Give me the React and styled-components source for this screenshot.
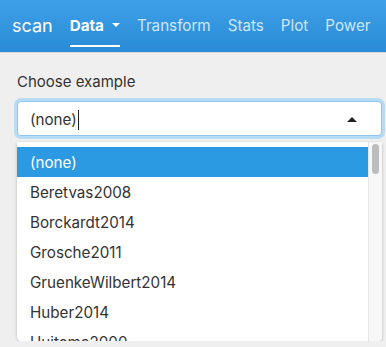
import styled, { createGlobalStyle } from 'styled-components'

const GlobalStyle = createGlobalStyle`
  body {
    margin: 0;
    background: #efefef;
    font-family: Inter, "Helvetica Neue", "Liberation Sans", sans-serif;
    overflow: hidden;
  }
`;

const Navbar = styled.div`
  height: 52px;
  display: flex;
  align-items: center;
  padding-left: 12px;
  background: linear-gradient(#3ea1e8, #2a8ad6);
  border-bottom: 1px solid #d8d8d8;
  white-space: nowrap;
`;
const Brand = styled.div`
  color: #fff;
  font-size: 18px;
  margin-right: 17px;
  padding-bottom: 2px;
`;
const NavItem = styled.div`
  position: relative;
  display: flex;
  align-items: center;
  font-size: 15.2px;
  margin-right: 17px;
  color: ${(props) => (props.active ? '#fff' : '#cfe6f8')};
  font-weight: ${(props) => (props.active ? 700 : 400)};
  padding-bottom: 2px;
  & span.caret {
    margin-left: 8px;
    width: 0;
    height: 0;
    border-left: 4px solid transparent;
    border-right: 4px solid transparent;
    border-top: 4px solid #fff;
  }
  &::after {
    content: '';
    display: ${(props) => (props.active ? 'block' : 'none')};
    position: absolute;
    left: 0;
    right: 0;
    top: 29px;
    height: 2px;
    background: #fff;
  }
`;

const Panel = styled.div`
  padding: 19px 4px 0 17px;
`;
const Label = styled.div`
  font-size: 15px;
  color: #333;
  margin-bottom: 10px;
`;
const SelectBox = styled.div`
  height: 33px;
  background: #fff;
  border: 1px solid #8fc6ee;
  border-radius: 4px;
  box-shadow: 0 0 0 3px #b9dcf5;
  display: flex;
  align-items: center;
  padding: 2px 24px 0 12px;
  box-sizing: content-box;
  height: 31px;
  font-size: 15.2px;
  color: #333;
  & .cursor {
    width: 1px;
    height: 20px;
    background: #222;
    margin-left: 1px;
  }
  & .spacer {
    flex: 1;
  }
  & .arrow {
    width: 0;
    height: 0;
    border-left: 5px solid transparent;
    border-right: 5px solid transparent;
    border-bottom: 5px solid #222;
  }
`;
const Menu = styled.div`
  margin-top: 6px;
  height: 199px;
  background: #fff;
  border-radius: 0 0 4px 4px;
  box-shadow: 0 1px 3px rgba(0, 0, 0, 0.25);
  display: flex;
  overflow: hidden;
`;
const Options = styled.div`
  flex: 1;
  padding-top: 5px;
`;
const Option = styled.div`
  height: 30px;
  display: flex;
  align-items: center;
  padding-left: 13px;
  font-size: 15.2px;
  color: ${(props) => (props.selected ? '#fff' : '#333')};
  background: ${(props) => (props.selected ? '#2c9ae3' : 'transparent')};
`;
const Scrollbar = styled.div`
  width: 14px;
  background: #f7f7f7;
  border-left: 1px solid #e6e6e6;
  padding: 2px 3px;
  box-sizing: border-box;
  & div {
    height: 30px;
    border-radius: 4px;
    background: #bdbdbd;
  }
`;

const items = ['(none)', 'Beretvas2008', 'Borckardt2014', 'Grosche2011', 'GruenkeWilbert2014', 'Huber2014', 'Huitema2000'];

export default function App() {
  return (
    <>
      <GlobalStyle />
      <Navbar>
        <Brand>scan</Brand>
        <NavItem active>Data<span className="caret" /></NavItem>
        <NavItem>Transform</NavItem>
        <NavItem>Stats</NavItem>
        <NavItem>Plot</NavItem>
        <NavItem>Power</NavItem>
      </Navbar>
      <Panel>
        <Label>Choose example</Label>
        <SelectBox>
          (none)<span className="cursor" />
          <span className="spacer" />
          <span className="arrow" />
        </SelectBox>
        <Menu>
          <Options>
            {items.map((it, i) => (
              <Option key={it} selected={i === 0}>{it}</Option>
            ))}
          </Options>
          <Scrollbar><div /></Scrollbar>
        </Menu>
      </Panel>
    </>
  )
}
